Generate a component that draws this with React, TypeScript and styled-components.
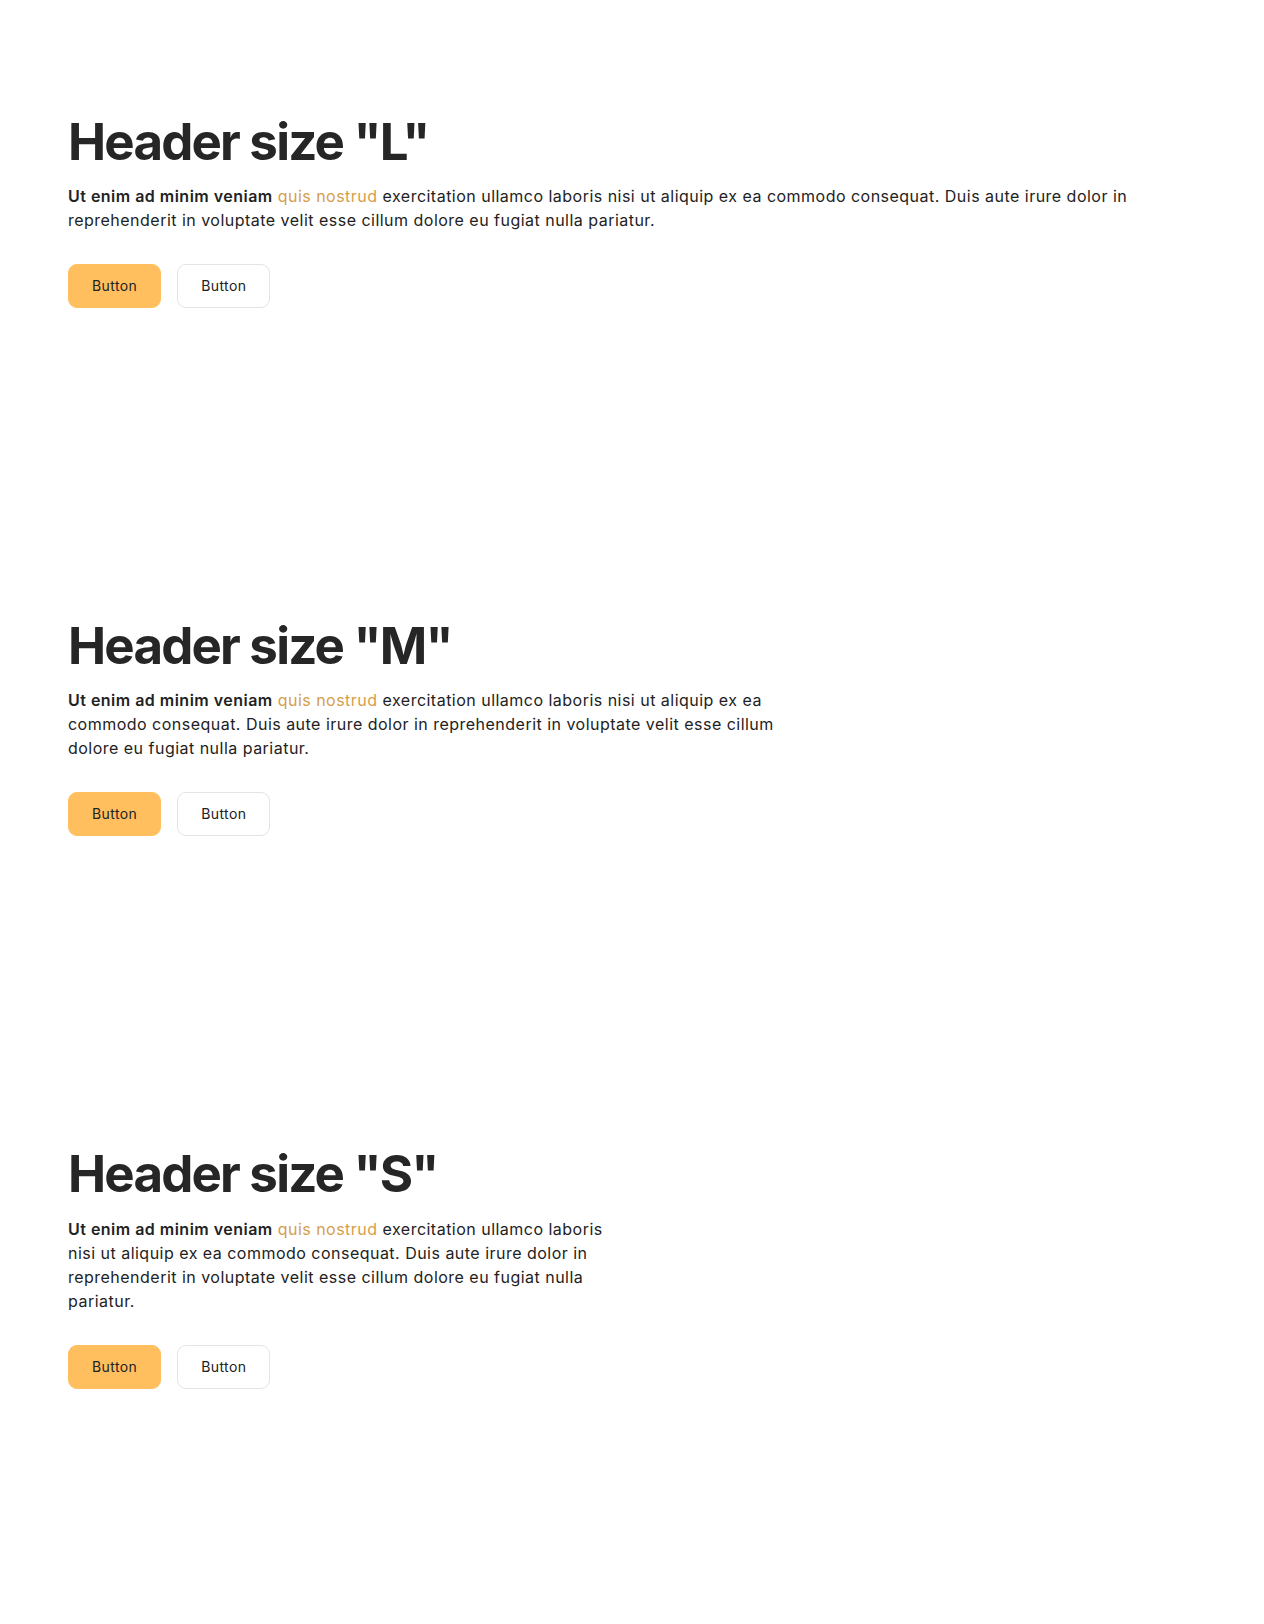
import React from "react";
import styled, { createGlobalStyle } from "styled-components";

const GlobalStyle = createGlobalStyle`
  html, body {
    margin: 0;
    padding: 0;
    background: #ffffff;
  }
  body {
    font-family: Inter, "Noto Sans", Arial, sans-serif;
    color: #222222;
    -webkit-font-smoothing: antialiased;
  }
  * { box-sizing: border-box; }
`;

const Page = styled.main`
  padding: 0 68px;
  min-height: 1624px;
`;

const Section = styled.section`
  padding: 111px 0 196px;
  display: flex;
  flex-direction: column;
  align-items: flex-start;
`;

const Heading = styled.h1`
  margin: 0 0 12px;
  font-family: Inter, sans-serif;
  font-weight: 700;
  font-size: 51px;
  letter-spacing: -1.8px;
  line-height: 1.2;
  color: #262626;
`;

const Body = styled.p<{ $maxWidth?: number }>`
  margin: 0;
  max-width: ${(p) => (p.$maxWidth ? `${p.$maxWidth}px` : "none")};
  font-size: 16px;
  letter-spacing: 0.48px;
  line-height: 24px;
  color: #222222;
`;

const Strong = styled.strong`
  font-weight: 600;
`;

const Accent = styled.span`
  color: #d69d4b;
`;

const Actions = styled.div`
  display: flex;
  gap: 16px;
  margin-top: 32px;
`;

const Button = styled.button<{ $primary?: boolean }>`
  height: 44px;
  padding: 0 23px;
  border-radius: 9px;
  border: 1px solid ${(p) => (p.$primary ? "#ffbf5e" : "#e4e4e4")};
  background: ${(p) => (p.$primary ? "#ffbf5e" : "#ffffff")};
  color: #222222;
  font-family: Inter, sans-serif;
  font-size: 14px;
  letter-spacing: 0.4px;
  font-weight: 400;
  line-height: 20px;
  cursor: pointer;
`;

const sections = [
  { size: "L", maxWidth: undefined as number | undefined },
  { size: "M", maxWidth: 720 },
  { size: "S", maxWidth: 550 },
];

export default function App() {
  return (
    <>
      <GlobalStyle />
      <Page>
        {sections.map((s) => (
          <Section key={s.size}>
            <Heading>Header size "{s.size}"</Heading>
            <Body $maxWidth={s.maxWidth}>
              <Strong>Ut enim ad minim veniam</Strong> <Accent>quis nostrud</Accent>{" "}
              exercitation ullamco laboris nisi ut aliquip ex ea commodo consequat. Duis aute
              irure dolor in reprehenderit in voluptate velit esse cillum dolore eu fugiat nulla
              pariatur.
            </Body>
            <Actions>
              <Button $primary>Button</Button>
              <Button>Button</Button>
            </Actions>
          </Section>
        ))}
      </Page>
    </>
  );
}
